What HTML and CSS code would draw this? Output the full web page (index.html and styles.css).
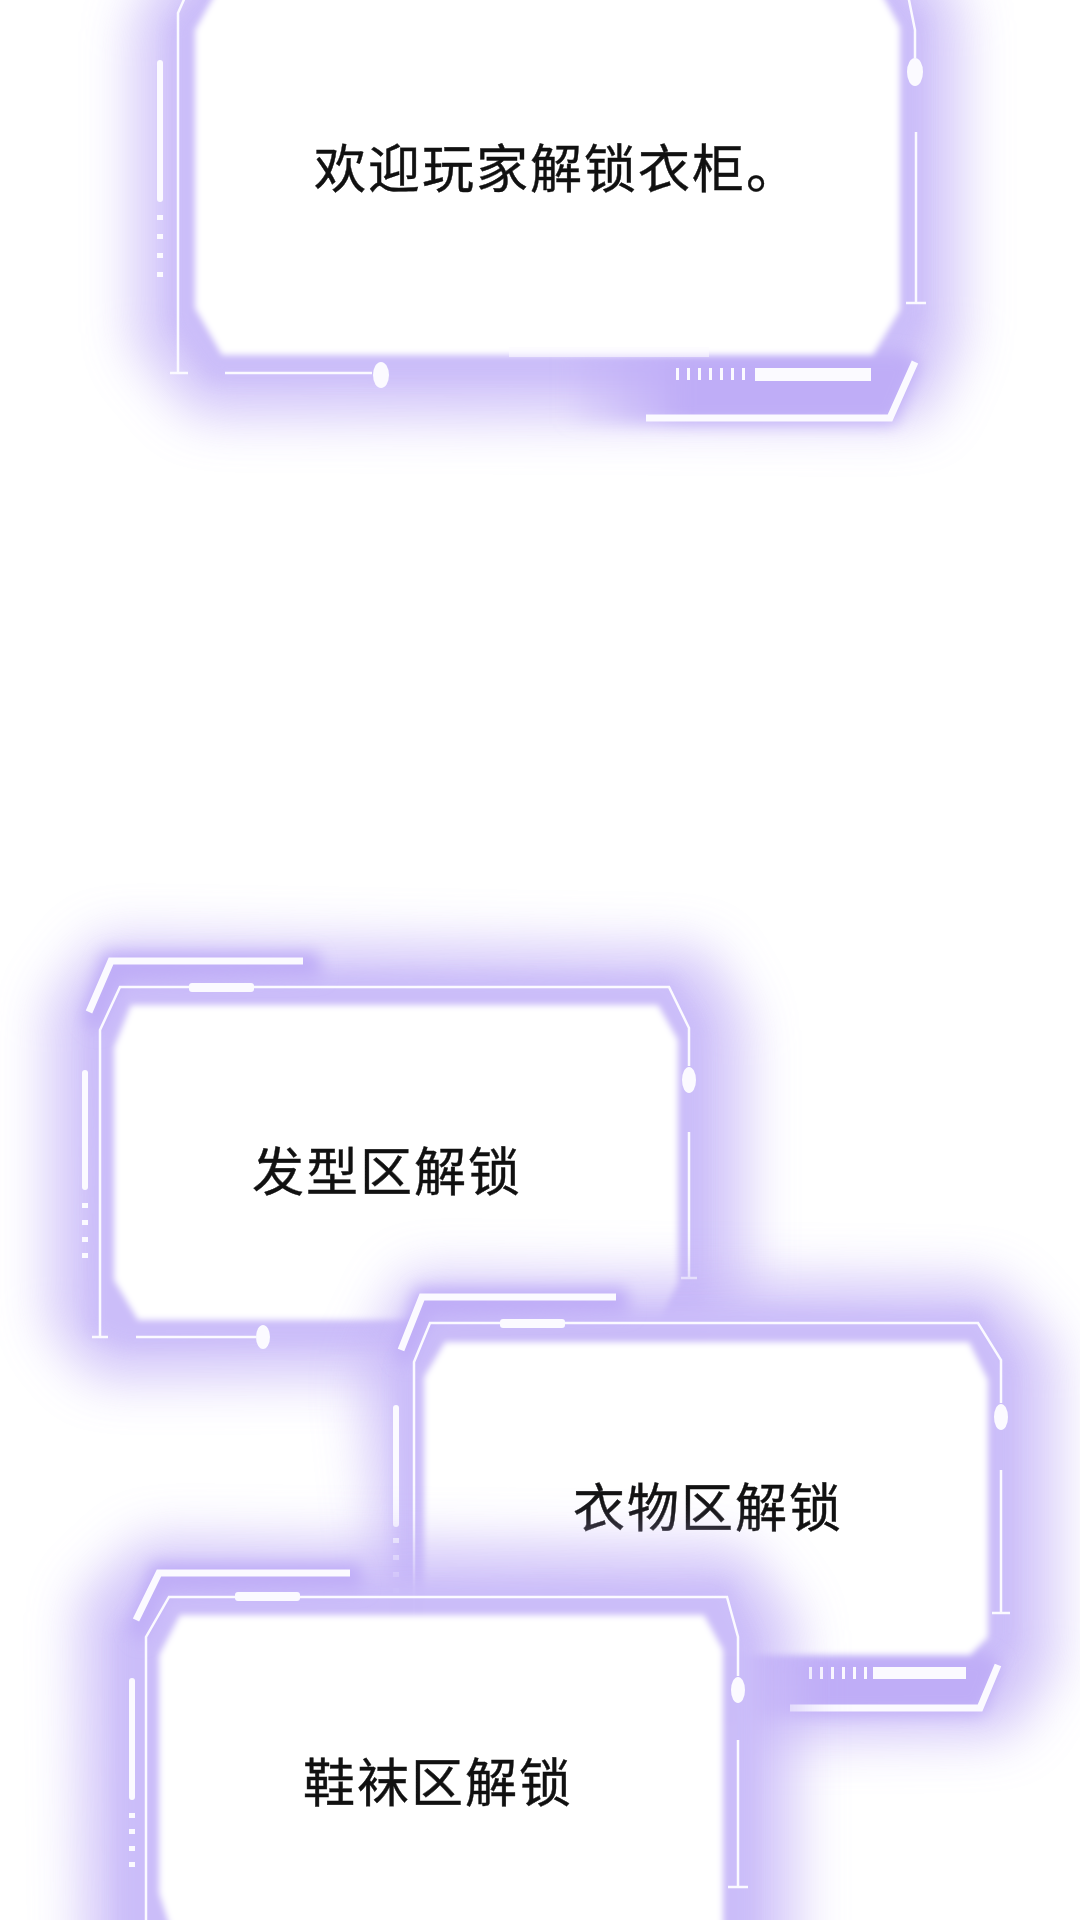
FILE: index.html
```html
<!DOCTYPE html>
<html lang="zh-CN">
<head>
    <meta charset="UTF-8">
    <meta name="viewport" content="width=1080, initial-scale=1.0">
    <title>衣柜解锁</title>
    <link rel="stylesheet" href="styles.css">
</head>
<body>
    <!-- filtros compartidos por todos los paneles -->
    <svg class="defs" width="0" height="0" aria-hidden="true">
        <defs>
            <filter id="haze" x="-50%" y="-50%" width="200%" height="200%">
                <feGaussianBlur stdDeviation="26"/>
            </filter>
            <filter id="soft" x="-30%" y="-30%" width="160%" height="160%">
                <feGaussianBlur stdDeviation="8"/>
            </filter>
            <filter id="edge" x="-5%" y="-5%" width="110%" height="110%">
                <feGaussianBlur stdDeviation="3"/>
            </filter>
            <linearGradient id="fade-left" x1="0" y1="0" x2="1" y2="0">
                <stop offset="0" stop-color="#bfadf7" stop-opacity="0"/>
                <stop offset="0.35" stop-color="#bfadf7" stop-opacity="1"/>
                <stop offset="1" stop-color="#bfadf7" stop-opacity="1"/>
            </linearGradient>
        </defs>
    </svg>

    <div class="page">

        <!-- panel 1 -->
        <div class="panel panel-1">
            <svg class="frame" width="704" height="355" viewBox="196 0 704 355">
                <polygon class="haze" points="195,-70 905,-70 960,10 960,340 925,420 195,415 135,345 135,20"/>
                <polygon class="band" points="230,-40 870,-40 924,20 924,322 892,380 210,380 170,324 170,25"/>
                <polygon class="band fade" points="560,352 905,352 920,362 895,424 560,424"/>
                <polygon class="sheet" points="223,-20 874,-20 900,27 900,310 873,355 222,355 195,308 195,30"/>
                <rect class="fill faint" x="509" y="347" width="200" height="10"/>

                <polyline class="thin" points="186,-5 178,13 178,373"/>
                <line class="thin" x1="170" y1="373" x2="188" y2="373"/>
                <rect class="fill" x="157" y="60" width="6" height="142" rx="3"/>
                <rect class="fill" x="157" y="215" width="6" height="5"/>
                <rect class="fill" x="157" y="234" width="6" height="5"/>
                <rect class="fill" x="157" y="253" width="6" height="5"/>
                <rect class="fill" x="157" y="272" width="6" height="5"/>
                <line class="thin" x1="225" y1="373" x2="372" y2="373"/>
                <ellipse class="fill" cx="381" cy="375" rx="8" ry="13"/>

                <polyline class="thin" points="908,-5 915,30 915,58"/>
                <ellipse class="fill" cx="915" cy="72" rx="8" ry="14"/>
                <line class="thin" x1="916" y1="132" x2="916" y2="303"/>
                <line class="thin" x1="906" y1="303" x2="926" y2="303"/>

                <line class="dashes" x1="676" y1="374" x2="753" y2="374"/>
                <rect class="fill" x="755" y="368" width="116" height="13"/>
                <polyline class="thick" points="646,418 890,418 915,362"/>
            </svg>
            <p class="caption">欢迎玩家解锁衣柜。</p>
        </div>

        <!-- panel 2 -->
        <div class="panel panel-2">
            <svg class="frame" width="564" height="315" viewBox="114 1005 564 315">
                <polygon class="haze" points="100,940 705,950 745,1020 745,1300 700,1375 95,1378 50,1325 50,1005"/>
                <polygon class="band" points="112,970 672,976 704,1025 704,1294 678,1344 125,1346 88,1332 86,1026"/>
                <polygon class="band deep" points="82,1018 104,952 318,952 322,978 122,982 98,1034"/>
                <polygon class="sheet" points="131,1005 658,1005 678,1040 678,1283 660,1320 138,1320 114,1280 114,1047"/>

                <polyline class="thick" points="89,1012 111,961 303,961"/>
                <rect class="fill" x="189" y="983" width="65" height="9" rx="3"/>
                <polyline class="thin" points="100,1337 100,1030 120,987 669,987 689,1028 689,1066"/>
                <ellipse class="fill" cx="689" cy="1080" rx="7" ry="13"/>
                <line class="thin" x1="689" y1="1132" x2="689" y2="1278"/>
                <line class="thin" x1="681" y1="1278" x2="697" y2="1278"/>
                <line class="thin" x1="92" y1="1337" x2="108" y2="1337"/>

                <rect class="fill" x="82" y="1070" width="6" height="120" rx="3"/>
                <rect class="fill" x="82" y="1203" width="6" height="5"/>
                <rect class="fill" x="82" y="1220" width="6" height="5"/>
                <rect class="fill" x="82" y="1237" width="6" height="5"/>
                <rect class="fill" x="82" y="1253" width="6" height="5"/>

                <line class="thin" x1="136" y1="1337" x2="256" y2="1337"/>
                <ellipse class="fill" cx="263" cy="1337" rx="7" ry="12"/>
            </svg>
            <p class="caption">发型区解锁</p>
        </div>

        <!-- panel 3 -->
        <div class="panel panel-3">
            <svg class="frame" width="564" height="313" viewBox="424 1342 564 313">
                <polygon class="haze" points="408,1275 995,1282 1055,1350 1055,1665 1010,1735 770,1738 395,1695 362,1370"/>
                <polygon class="band" points="426,1308 982,1310 1015,1365 1015,1644 988,1670 430,1674 396,1642 396,1366"/>
                <polygon class="band deep" points="394,1355 416,1288 626,1288 630,1314 432,1318 408,1366"/>
                <polygon class="band fade" points="720,1652 985,1652 1002,1664 983,1714 720,1716"/>
                <polygon class="sheet" points="445,1342 969,1342 988,1380 988,1637 970,1655 445,1655 424,1630 424,1377"/>

                <polyline class="thick" points="401,1350 422,1297 616,1297"/>
                <rect class="fill" x="500" y="1319" width="65" height="9" rx="3"/>
                <polyline class="thin" points="414,1700 414,1362 430,1323 978,1323 1001,1360 1001,1403"/>
                <ellipse class="fill" cx="1001" cy="1417" rx="7" ry="13"/>
                <line class="thin" x1="1001" y1="1470" x2="1001" y2="1613"/>
                <line class="thin" x1="992" y1="1613" x2="1010" y2="1613"/>

                <rect class="fill" x="393" y="1405" width="6" height="122" rx="3"/>
                <rect class="fill" x="393" y="1538" width="6" height="5"/>
                <rect class="fill" x="393" y="1555" width="6" height="5"/>
                <rect class="fill" x="393" y="1572" width="6" height="5"/>
                <rect class="fill" x="393" y="1588" width="6" height="5"/>

                <line class="dashes" x1="809" y1="1673" x2="869" y2="1673"/>
                <rect class="fill" x="873" y="1667" width="93" height="12"/>
                <polyline class="thick" points="790,1708 980,1708 998,1665"/>
            </svg>
            <p class="caption">衣物区解锁</p>
        </div>

        <!-- panel 4 -->
        <div class="panel panel-4">
            <svg class="frame" width="564" height="330" viewBox="159 1615 564 330">
                <polygon class="haze" points="145,1540 742,1548 795,1620 795,1990 85,1990 80,1600"/>
                <polygon class="band" points="158,1580 728,1583 756,1640 756,1990 116,1990 116,1630"/>
                <polygon class="band deep" points="129,1630 152,1563 360,1563 364,1590 165,1592 142,1644"/>
                <polygon class="sheet" points="180,1615 704,1615 723,1650 723,1990 190,1990 159,1893 159,1655"/>

                <polyline class="thick" points="136,1620 159,1573 350,1573"/>
                <rect class="fill" x="235" y="1592" width="65" height="9" rx="3"/>
                <polyline class="thin" points="146,1940 146,1637 169,1597 727,1597 738,1637 738,1676"/>
                <ellipse class="fill" cx="738" cy="1690" rx="7" ry="13"/>
                <line class="thin" x1="738" y1="1740" x2="738" y2="1887"/>
                <line class="thin" x1="728" y1="1887" x2="748" y2="1887"/>

                <rect class="fill" x="129" y="1678" width="6" height="122" rx="3"/>
                <rect class="fill" x="129" y="1813" width="6" height="5"/>
                <rect class="fill" x="129" y="1829" width="6" height="5"/>
                <rect class="fill" x="129" y="1846" width="6" height="5"/>
                <rect class="fill" x="129" y="1862" width="6" height="5"/>
            </svg>
            <p class="caption">鞋袜区解锁</p>
        </div>

    </div>
</body>
</html>
```

FILE: styles.css
```css
body {
    margin: 0;
    padding: 0;
    background: #ffffff;
    font-family: "Noto Sans CJK SC", "Noto Sans", sans-serif;
    overflow: hidden;
}

.defs {
    position: absolute;
    width: 0;
    height: 0;
}

.page {
    position: relative;
    width: 1080px;
    height: 1920px;
    overflow: hidden;
    background: #ffffff;
}

/* cada panel se coloca sobre el lienzo del cómic */
.panel {
    position: absolute;
    display: flex;
    align-items: center;
    justify-content: center;
    box-sizing: border-box;
}

.panel-1 {
    left: 196px;
    top: 0;
    width: 704px;
    height: 355px;
    padding-bottom: 24px;
    padding-left: 18px;
}

.panel-2 {
    left: 114px;
    top: 1005px;
    width: 564px;
    height: 315px;
    padding-top: 12px;
    padding-right: 18px;
}

.panel-3 {
    left: 424px;
    top: 1342px;
    width: 564px;
    height: 313px;
    padding-top: 13px;
    padding-left: 4px;
}

.panel-4 {
    left: 159px;
    top: 1615px;
    width: 564px;
    height: 330px;
    padding-right: 6px;
}

.frame {
    position: absolute;
    left: 0;
    top: 0;
    overflow: visible;
}

.haze {
    fill: #c6b6f8;
    opacity: 0.8;
    filter: url(#haze);
}

.band {
    fill: #cbbdf9;
    opacity: 0.9;
    filter: url(#soft);
}

.band.deep {
    fill: #bfadf7;
    opacity: 1;
}

.band.fade {
    fill: url(#fade-left);
    opacity: 1;
}

.sheet {
    fill: #ffffff;
    filter: url(#edge);
}

.fill {
    fill: #fbfaff;
}

.fill.faint {
    opacity: 0.6;
}

.thin {
    fill: none;
    stroke: #fbfaff;
    stroke-width: 2.5;
}

.thick {
    fill: none;
    stroke: #fbfaff;
    stroke-width: 7;
}

.dashes {
    stroke: #fbfaff;
    stroke-width: 12;
    stroke-dasharray: 3 8;
}

.caption {
    position: relative;
    margin: 0;
    font-size: 52px;
    line-height: 1;
    letter-spacing: 2px;
    color: #111111;
    white-space: nowrap;
    -webkit-text-stroke: 0.4px #111111;
}
```
